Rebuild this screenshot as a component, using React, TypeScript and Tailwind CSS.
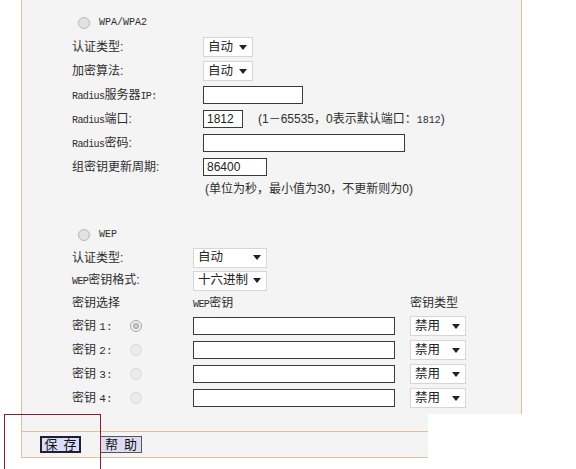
const cjk = "font-['Liberation_Sans','Noto_Sans_CJK_SC',sans-serif]";
const mono = "font-['Liberation_Mono',monospace]";
const lat = "font-['Liberation_Mono',monospace] text-[10px] tracking-[-0.6px]";

function Radio({ checked = false, faint = false }: { checked?: boolean; faint?: boolean }) {
  if (checked) {
    return (
      <span className="flex h-[12px] w-[12px] items-center justify-center rounded-full border border-[#a8a8a8] bg-[#f0f0f0]">
        <span className="h-[6px] w-[6px] rounded-full border border-[#9a9a9a] bg-[#cfcfcf]" />
      </span>
    );
  }
  return (
    <span
      className={
        faint
          ? "h-[12px] w-[12px] rounded-full border border-[#dadada] bg-[#ebebeb]"
          : "h-[12px] w-[12px] rounded-full border border-[#b9b9b9] bg-[#e2e2e2]"
      }
    />
  );
}

function Select({ value, width }: { value: string; width: string }) {
  return (
    <div
      className={`flex h-[20px] items-center justify-between border border-[#d6d6d6] bg-white pl-[4px] pr-[5px] text-[12.5px] leading-none text-[#222] ${width}`}
    >
      <span>{value}</span>
      <svg width="8" height="5" viewBox="0 0 8 5" className="shrink-0">
        <path d="M0 0 L8 0 L4 5 Z" fill="#222" />
      </svg>
    </div>
  );
}

function Input({ value = "", width }: { value?: string; width: string }) {
  return (
    <div
      className={`flex h-[18px] items-center border border-[#3a3a3a] bg-white pl-[3px] text-[12px] leading-none text-[#222] ${width}`}
    >
      {value}
    </div>
  );
}

function Row({ label, children, h = "h-[24px]" }: { label: React.ReactNode; children?: React.ReactNode; h?: string }) {
  return (
    <div className={`flex items-center ${h}`}>
      <div className="w-[131px] shrink-0">{label}</div>
      {children}
    </div>
  );
}

function WepRow({ label, children, h = "h-[24px]" }: { label: React.ReactNode; children?: React.ReactNode; h?: string }) {
  return (
    <div className={`flex items-center ${h}`}>
      <div className="w-[121px] shrink-0">{label}</div>
      {children}
    </div>
  );
}

function KeyRow({ n, checked }: { n: number; checked?: boolean }) {
  return (
    <div className="flex h-[24px] items-center">
      <div className="flex w-[121px] shrink-0 items-center">
        <span className="w-[58px]">
          密钥 <span className={`${mono} text-[11px]`}>{n}:</span>
        </span>
        <Radio checked={checked} faint={!checked} />
      </div>
      <Input width="w-[202px]" />
      <div className="ml-[15px]">
        <Select value="禁用" width="w-[56px]" />
      </div>
    </div>
  );
}

export default function App() {
  return (
    <div className={`relative h-[469px] w-[576px] overflow-hidden bg-white text-[12px] leading-none text-[#2e2e2e] ${cjk}`}>
      <div className="ml-[21px] w-[501px] border-b border-l border-r border-[#e0bf9f] bg-[#f4f4f4]">
        <div className="pl-[50px] pt-[11px]">
          {/* WPA/WPA2 */}
          <div className="flex h-[24px] items-center pl-[6px]">
            <Radio />
            <span className={`ml-[9px] ${mono} text-[10px]`}>WPA/WPA2</span>
          </div>
          <Row label="认证类型:">
            <Select value="自动" width="w-[50px]" />
          </Row>
          <Row label="加密算法:">
            <Select value="自动" width="w-[50px]" />
          </Row>
          <Row
            label={
              <span>
                <span className={lat}>Radius</span>服务器<span className={lat}>IP:</span>
              </span>
            }
          >
            <Input width="w-[100px]" />
          </Row>
          <Row
            label={
              <span>
                <span className={lat}>Radius</span>端口:
              </span>
            }
          >
            <Input value="1812" width="w-[40px]" />
            <span className="ml-[15px]">
              (1－65535，0表示默认端口：<span className={`${mono} text-[10px]`}>1812</span>)
            </span>
          </Row>
          <Row
            label={
              <span>
                <span className={lat}>Radius</span>密码:
              </span>
            }
          >
            <Input width="w-[202px]" />
          </Row>
          <Row label="组密钥更新周期:">
            <Input value="86400" width="w-[64px]" />
          </Row>
          <Row label="" h="h-[20px]">
            <span className="ml-[2px]">(单位为秒，最小值为30，不更新则为0)</span>
          </Row>

          {/* WEP */}
          <div className="mt-[24px] flex h-[23px] items-center pl-[6px]">
            <Radio />
            <span className={`ml-[9px] ${mono} text-[10px]`}>WEP</span>
          </div>
          <WepRow label="认证类型:" h="h-[23px]">
            <Select value="自动" width="w-[74px]" />
          </WepRow>
          <WepRow
            label={
              <span>
                <span className={lat}>WEP</span>密钥格式:
              </span>
            }
            h="h-[23px]"
          >
            <Select value="十六进制" width="w-[74px]" />
          </WepRow>
          <WepRow label="密钥选择" h="h-[22px]">
            <span className="w-[217px]">
              <span className={lat}>WEP</span>密钥
            </span>
            <span>密钥类型</span>
          </WepRow>
          <KeyRow n={1} checked />
          <KeyRow n={2} />
          <KeyRow n={3} />
          <KeyRow n={4} />
          <div className="h-[21px]" />
        </div>
        <div className="flex h-[26px] items-center border-t border-[#e0bf9f] pl-[18px]">
          <button className="flex h-[17px] w-[41px] items-center justify-center gap-[6px] border-2 border-[#1e1e3a] bg-[#dcdcf6] text-[13px] leading-none text-[#111]">
            <span>保</span>
            <span>存</span>
          </button>
          <button className="ml-[19px] flex h-[17px] w-[42px] items-center justify-center gap-[6px] border border-[#555] bg-[#dedcf2] text-[13px] leading-none text-[#111]">
            <span>帮</span>
            <span>助</span>
          </button>
        </div>
      </div>

      {/* erased watermark area */}
      <div className="absolute bottom-0 left-[428px] right-0 top-[414px] bg-white" />
      {/* annotation box */}
      <div className="absolute left-[4px] top-[414px] h-[60px] w-[97px] border border-[#8b1c2c]" />
    </div>
  );
}
